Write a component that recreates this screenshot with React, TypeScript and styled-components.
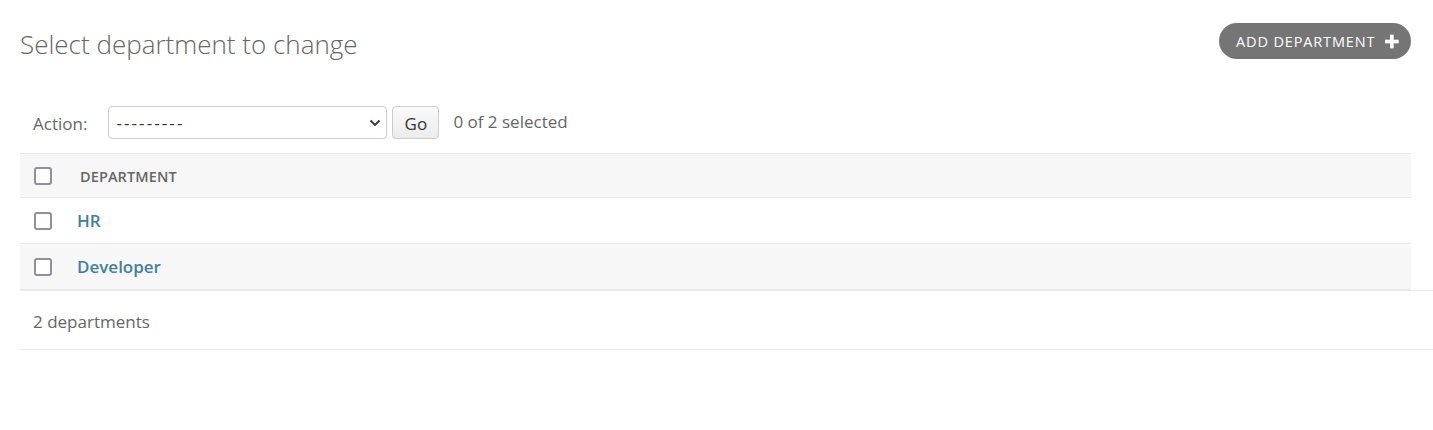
import React from "react";
import styled, { createGlobalStyle } from "styled-components";

const GlobalStyle = createGlobalStyle`
  html, body { margin: 0; padding: 0; background: #fff; }
  body {
    font-family: "Open Sans", "Noto Sans", Arial, sans-serif;
    color: #333;
    font-size: 17px;
  }
  * { box-sizing: border-box; }
`;

const Page = styled.div`
  padding-left: 20px;
`;

const Header = styled.div`
  display: flex;
  justify-content: space-between;
  align-items: flex-start;
  padding-top: 23px;
  padding-right: 22px;
  height: 59px;
`;

const Title = styled.h1`
  margin: 3px 0 0;
  font-size: 26px;
  line-height: 36px;
  font-weight: 300;
  color: #666;
`;

const AddButton = styled.a`
  display: flex;
  align-items: center;
  gap: 10px;
  height: 36px;
  width: 192px;
  padding: 0 12px 0 17px;
  border-radius: 18px;
  background: #757575;
  color: #fff;
  font-size: 14.5px;
  letter-spacing: 0.85px;
  text-transform: uppercase;
  text-decoration: none;
  white-space: nowrap;
`;

const ActionBar = styled.div`
  display: flex;
  align-items: center;
  margin-top: 47px;
  padding-left: 13px;
  height: 33px;
  color: #666;
`;

const ActionLabel = styled.label`
  margin-right: 21px;
  padding-top: 1px;
`;

const SelectWrap = styled.div`
  position: relative;
  width: 279px;
  height: 33px;
`;

const Select = styled.select`
  appearance: none;
  width: 100%;
  height: 100%;
  border: 1px solid #ccc;
  border-radius: 4px;
  background: #fff;
  padding: 0 24px 0 7px;
  font-family: inherit;
  font-size: 17px;
  letter-spacing: 2.1px;
  color: #333;
`;

const Chevron = styled.svg`
  position: absolute;
  right: 6px;
  top: 13px;
  pointer-events: none;
`;

const GoButton = styled.button`
  margin-left: 5px;
  width: 47px;
  height: 33px;
  border: 1px solid #ccc;
  border-radius: 4px;
  background: linear-gradient(#fafafa, #ececec);
  font-family: inherit;
  font-size: 17px;
  color: #333;
  padding: 2px 0 0;
`;

const Counter = styled.span`
  margin-left: 14px;
  padding-bottom: 3px;
  color: #666;
`;

const Results = styled.div`
  margin-top: 14px;
  margin-right: 22px;
`;

const Row = styled.div<{ $shaded?: boolean; $head?: boolean }>`
  display: flex;
  align-items: center;
  height: ${(p) => (p.$head ? 45 : 46)}px;
  background: ${(p) => (p.$shaded ? "#f7f7f7" : "#fff")};
  border-top: ${(p) => (p.$head ? "1px solid #eaeaea" : "none")};
  border-bottom: 1px solid #eaeaea;
  padding-left: 14px;
`;

const Check = styled.input.attrs({ type: "checkbox" })`
  appearance: none;
  margin: 0;
  width: 18px;
  height: 18px;
  border: 2px solid #8f8f9d;
  border-radius: 3px;
  background: #fff;
`;

const HeadText = styled.span`
  margin-left: 28px;
  padding-top: 2px;
  font-size: 14.5px;
  font-weight: 600;
  color: #666;
  text-transform: uppercase;
  letter-spacing: 0.1px;
`;

const ItemLink = styled.a`
  margin-left: 25px;
  font-weight: 600;
  color: #447e9b;
  text-decoration: none;
  font-size: 17px;
`;

const Paginator = styled.div`
  display: flex;
  align-items: center;
  height: 60px;
  padding: 2px 0 0 13px;
  border-top: 1px solid #eaeaea;
  border-bottom: 1px solid #eaeaea;
  color: #666;
`;

const PlusIcon = () => (
  <svg width="15" height="15" viewBox="0 0 15 15" aria-hidden="true">
    <rect x="5.5" y="0" width="4" height="15" fill="#fff" />
    <rect x="0" y="5.5" width="15" height="4" fill="#fff" />
  </svg>
);

const departments = ["HR", "Developer"];

export default function App() {
  return (
    <>
      <GlobalStyle />
      <Page>
        <Header>
          <Title>Select department to change</Title>
          <AddButton href="#">
            Add department
            <PlusIcon />
          </AddButton>
        </Header>
        <ActionBar>
          <ActionLabel>Action:</ActionLabel>
          <SelectWrap>
            <Select defaultValue="">
              <option value="">---------</option>
              <option value="delete">Delete selected departments</option>
            </Select>
            <Chevron width="12" height="8" viewBox="0 0 12 8" aria-hidden="true">
              <path d="M1.5 1.5 L6 6 L10.5 1.5" fill="none" stroke="#333" strokeWidth="1.8" />
            </Chevron>
          </SelectWrap>
          <GoButton>Go</GoButton>
          <Counter>0 of 2 selected</Counter>
        </ActionBar>
        <Results>
          <Row $head $shaded>
            <Check />
            <HeadText>Department</HeadText>
          </Row>
          {departments.map((d, i) => (
            <Row key={d} $shaded={i % 2 === 1}>
              <Check />
              <ItemLink href="#">{d}</ItemLink>
            </Row>
          ))}
        </Results>
        <Paginator>2 departments</Paginator>
      </Page>
    </>
  );
}
